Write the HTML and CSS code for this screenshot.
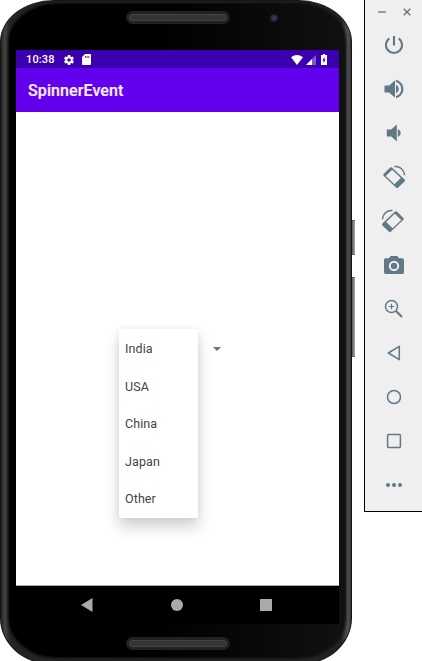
FILE: index.html
```html
<!DOCTYPE html>
<html lang="en">
<head>
<meta charset="utf-8">
<title>SpinnerEvent</title>
<link rel="stylesheet" href="styles.css">
</head>
<body>
<main class="emulator">
  <section class="device">
    <div class="body">
      <div class="face">
        <header class="bezel-top"><span class="grille"></span><span class="camera"></span></header>
        <div class="screen">
          <div class="status">
            <span class="time">10:38</span>
            <svg class="gear" viewBox="0 0 24 24"><path fill-rule="evenodd" d="M19.400 13a7.500 7.500 0 0 0 0-2l2.100-1.650a.5.500 0 0 0 .12-.64l-2-3.460a.5.500 0 0 0-.6-.22l-2.500 1a7 7 0 0 0-1.700-.98l-.37-2.650A.5.500 0 0 0 14 2h-4a.5.500 0 0 0-.5.400l-.37 2.650a7 7 0 0 0-1.700.98l-2.500-1a.5.500 0 0 0-.6.220l-2 3.460a.5.500 0 0 0 .12.640L4.600 11a7.500 7.500 0 0 0 0 2l-2.150 1.650a.5.500 0 0 0-.12.640l2 3.460a.5.500 0 0 0 .6.220l2.500-1a7 7 0 0 0 1.700.98l.37 2.650A.5.500 0 0 0 10 22h4a.5.500 0 0 0 .5-.4l.37-2.650a7 7 0 0 0 1.700-.98l2.500 1a.5.500 0 0 0 .6-.22l2-3.460a.5.500 0 0 0-.12-.64zM12 15.500a3.500 3.500 0 1 1 0-7 3.500 3.500 0 0 1 0 7z"/></svg>
            <svg class="sd" viewBox="0 0 9 11"><path fill-rule="evenodd" d="M3 0h5a1 1 0 0 1 1 1v9a1 1 0 0 1-1 1H1a1 1 0 0 1-1-1V3zM3 2v2h.8V2zm1.700 0v2h.8V2zm1.700 0v2h.8V2z"/></svg>
            <span class="signals">
              <svg width="12" height="10" viewBox="0 0 12 10"><path d="M0 2.300Q6-2.200 12 2.300L6 10z"/></svg>
              <svg width="10" height="10" viewBox="0 0 10 10"><path opacity=".35" d="M0 10L10 0v10z"/><path d="M0 10l6-6v6z"/></svg>
              <svg class="battery" width="6" height="11" viewBox="0 0 6 11"><path fill-rule="evenodd" d="M2 0h2v1h2v10H0V1h2zM3.400 2.800L1.400 6.500h1.200v2.700l2-3.800H3.400z"/></svg>
            </span>
          </div>
          <h1 class="appbar">SpinnerEvent</h1>
          <div class="content">
            <ul class="menu">
              <li>India</li><li>USA</li><li>China</li><li>Japan</li><li>Other</li>
            </ul>
            <span class="caret"></span>
          </div>
          <nav class="navbar">
            <svg viewBox="0 0 14 14"><path d="M12.500 0v14L1 7z"/></svg>
            <svg viewBox="0 0 14 14"><circle cx="7" cy="7" r="6"/></svg>
            <svg viewBox="0 0 14 14"><path d="M1 1h12v12H1z"/></svg>
          </nav>
        </div>
        <footer class="bezel-bottom"><span class="grille"></span></footer>
      </div>
    </div>
    <div class="keys"><span class="power-key"></span><span class="volume-key"></span></div>
  </section>
  <aside class="tools">
    <div class="window">
      <svg width="8" height="8" viewBox="0 0 8 8"><path d="M0 4h8"/></svg>
      <svg width="8" height="8" viewBox="0 0 8 8"><path d="M.7.7l6.600 6.600M7.300.7L.7 7.300"/></svg>
    </div>
    <div class="tool"><svg viewBox="0 0 24 24"><path class="line bold" d="M12 3v9.500M7.300 5.300a8.100 8.100 0 1 0 9.400 0"/></svg></div>
    <div class="tool"><svg viewBox="0 0 24 24"><path d="M2.500 8.500v7h4.700l5.800 5.300V3.200L7.200 8.500zM14 7.800v8.400c1.700-.8 2.700-2.400 2.700-4.200S15.700 8.600 14 7.800zM14 2.800v2.200c3.100.9 5.200 3.700 5.200 7s-2.100 6.100-5.200 7v2.200c4.300-1 7.400-4.700 7.400-9.200S18.300 3.800 14 2.800z"/></svg></div>
    <div class="tool"><svg viewBox="0 0 24 24"><path d="M4.800 8.500v7h4.400l5.600 5V3.500l-5.600 5zM15.800 8v8c1.700-.8 2.900-2.300 2.900-4s-1.200-3.200-2.900-4z"/></svg></div>
    <div class="tool"><svg viewBox="0 0 24 24"><g id="rotate"><path fill-rule="evenodd" d="M8.200 2.600a1.300 1.300 0 0 1 1.800 0L22.600 14.600a1.300 1.300 0 0 1 0 1.800L16 22.800a1.300 1.300 0 0 1-1.800 0L1.600 10.800a1.300 1.300 0 0 1 0-1.800zM10.200 4.800L3.800 11l8.600 8.200 6.400-6.200z"/><path class="line" d="M12.500 1.500C17.800.8 22 4.700 22.600 10.200"/></g></svg></div>
    <div class="tool"><svg viewBox="0 0 24 24"><use href="#rotate" transform="translate(23 0) scale(-1 1)"/></svg></div>
    <div class="tool"><svg viewBox="0 0 24 24"><path fill-rule="evenodd" d="M8.700 3h6.600l1.800 2.200h3.200A1.800 1.800 0 0 1 22 7v12a1.800 1.800 0 0 1-1.700 1.900H3.700A1.800 1.800 0 0 1 2 19V7a1.800 1.800 0 0 1 1.700-1.800h3.200zM12 7.700a5.200 5.200 0 1 0 0 10.400 5.200 5.200 0 0 0 0-10.400z"/><circle cx="12" cy="12.900" r="3.200"/></svg></div>
    <div class="tool"><svg viewBox="0 0 24 24"><circle class="line" cx="9.500" cy="9.500" r="6"/><path class="line thin" d="M9.500 6.700v5.600M6.700 9.500h5.600"/><path class="line bold" d="M14 14l6 6"/></svg></div>
    <div class="tool"><svg viewBox="0 0 24 24"><path class="line" d="M17.300 5.300v13.400L6.300 12z"/></svg></div>
    <div class="tool"><svg viewBox="0 0 24 24"><circle class="line" cx="12" cy="12" r="6.500"/></svg></div>
    <div class="tool"><svg viewBox="0 0 24 24"><rect class="line" x="5.600" y="5.600" width="12.800" height="12.800" rx=".8"/></svg></div>
    <div class="tool"><svg viewBox="0 0 24 24"><circle cx="6" cy="12" r="2"/><circle cx="12" cy="12" r="2"/><circle cx="18" cy="12" r="2"/></svg></div>
  </aside>
</main>
</body>
</html>
```

FILE: styles.css
```css
* { box-sizing: border-box; }
body { margin: 0; background: #fff; font-family: Roboto, "Liberation Sans", sans-serif; overflow: hidden; }
.emulator { display: flex; width: 422px; height: 661px; align-items: flex-start; overflow: hidden; }
.device { display: flex; width: 364px; height: 661px; }
.body {
  width: 352px; height: 664px; padding: 3px 6px 3px 7px;
  border: 1px solid #151515; border-radius: 54px 54px 50px 50px / 42px 42px 46px 46px;
  background: linear-gradient(90deg, #222, #454545 4px, #242424 9px, #222 340px, #555 347px, #303030);
}
.face {
  height: 653px; margin: 0 0 0 1px; padding: 0 5px 0 7px;
  border-radius: 48px 48px 46px 46px / 38px 38px 40px 40px;
  background: linear-gradient(90deg, #000 45%, #111 100%);
  box-shadow: 0 0 3px 1px #080808;
}
.bezel-top, .bezel-bottom { display: flex; justify-content: center; position: relative; }
.bezel-top { height: 46px; padding-top: 7px; }
.bezel-bottom { height: 33px; padding-top: 13px; }
.grille { width: 104px; height: 13px; border: 3px solid #212121; border-radius: 7px; background: #343434; box-shadow: inset 0 0 1px 1px #454545; }
.camera { position: absolute; left: 254px; top: 10px; width: 8px; height: 8px; border-radius: 50%; background: radial-gradient(#344964, #141b26 75%); }
.screen { display: flex; flex-direction: column; width: 323px; height: 574px; }
.status { display: flex; align-items: center; height: 18px; padding: 1px 11px 0 10px; color: #fff; background: #3a00b0; font-size: 11px; font-weight: 500; }
.status svg { fill: #fff; }
.time { width: 37px; letter-spacing: .15px; }
.gear { width: 12px; height: 12px; }
.sd { width: 9px; height: 11px; margin-left: 7px; }
.signals { display: flex; align-items: center; gap: 2px; margin-left: auto; }
.signals svg:first-child { margin-right: 1px; }
.battery { margin: 0 1px 0 3px; }
.appbar { margin: 0; height: 44px; padding-left: 12px; background: #6200ee; color: #f8edff; font-size: 16px; line-height: 46px; font-weight: 500; letter-spacing: .1px; -webkit-text-stroke: .2px #f8edff; }
.content { display: flex; align-items: flex-start; height: 474px; padding: 217px 0 0 103px; background: #fff; border-bottom: 1px solid #aaa; }
.menu { list-style: none; margin: 0; padding: 1px 0; width: 79px; height: 189px; border-radius: 1px; background: #fff; box-shadow: 0 9px 15px rgba(0,0,0,.18), 0 0 6px rgba(0,0,0,.07); }
.menu li { height: 37.600px; padding-left: 6px; font-size: 12.500px; line-height: 38px; color: #444; letter-spacing: .1px; }
.caret { margin: 18px 0 0 15px; border: 4px solid transparent; border-top-color: #707070; border-bottom: 0; }
.navbar { display: flex; align-items: center; justify-content: center; gap: 75.500px; height: 38px; padding-right: 2px; background: #000; }
.navbar svg { width: 14px; height: 14px; fill: #aaa; }
.keys { display: flex; flex-direction: column; gap: 22px; padding-top: 220px; }
.keys span { width: 3px; background: linear-gradient(90deg, #555, #aaa); border: solid #666; border-width: 1px 0; }
.power-key { height: 35px; }
.volume-key { height: 80px; }
.tools { width: 58px; height: 512px; border: solid #000; border-width: 0 0 1px 1px; background: #efefef; }
.window { display: flex; justify-content: center; gap: 17px; height: 23px; padding: 8px 0 0 2px; }
.window svg { fill: none; stroke: #607078; stroke-width: 1.300; }
.tool { display: flex; align-items: center; justify-content: center; height: 44px; padding-left: 1px; }
.tool svg { width: 24px; height: 24px; fill: #607985; }
.tool .line { fill: none; stroke: #607985; stroke-width: 1.500; stroke-linejoin: round; }
.tool .thin { stroke-width: 1.200; }
.tool .bold { stroke-width: 2.100; }
```
